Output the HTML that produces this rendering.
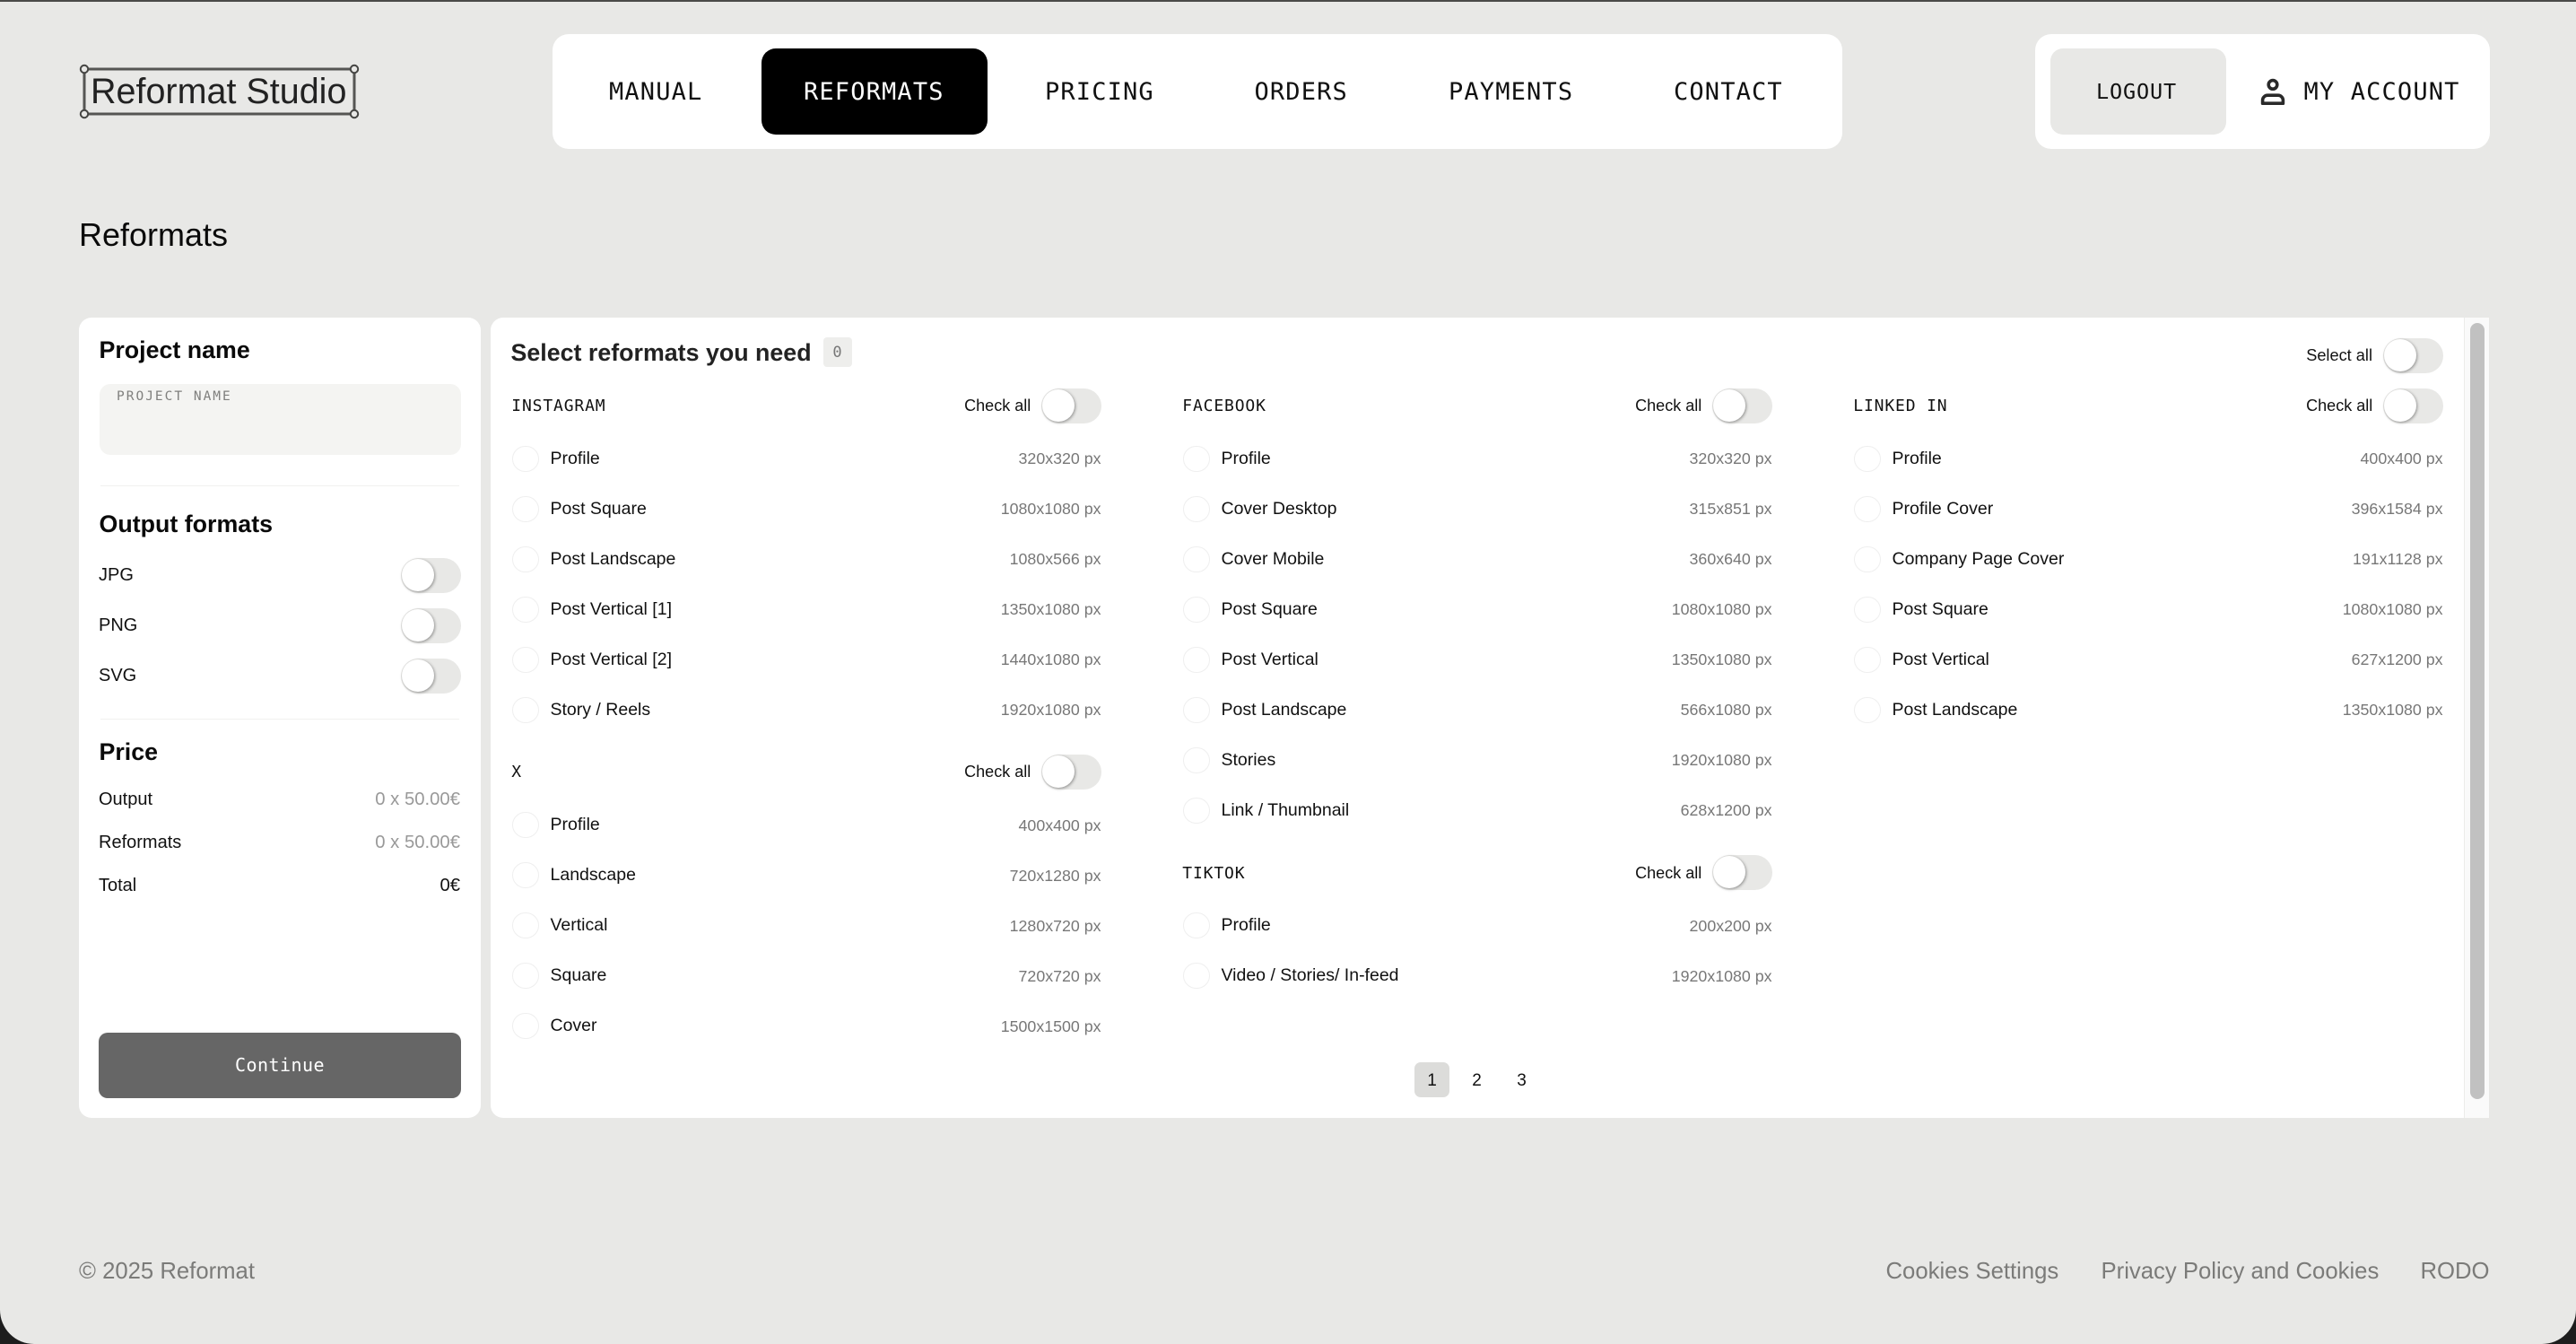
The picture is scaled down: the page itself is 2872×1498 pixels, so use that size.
<!DOCTYPE html>
<html lang="en"><head><meta charset="utf-8"><title>Reformats</title>
<style>
*{box-sizing:border-box;margin:0;padding:0}
html,body{width:2872px;height:1498px;overflow:hidden;background:#1d1d1d}
body{position:relative;font-family:"Liberation Sans",Arial,sans-serif;color:#111}
#pg{position:absolute;left:0;top:2px;width:2872px;height:1496px;background:#e8e8e6;border-radius:0 0 38px 38px}
#bar{position:absolute;left:0;top:0;width:2872px;height:2px;background:#4b4b49}
#root{position:absolute;left:0;top:0;width:2872px;height:1498px}
.a{position:absolute;white-space:nowrap}
.m{font-family:"DejaVu Sans Mono",monospace}
.panel{position:absolute;background:#fff;top:37.5px;height:128.5px;border-radius:18px}
.n{position:absolute;top:83px;line-height:40px;font-size:27px;letter-spacing:1.15px;font-family:"DejaVu Sans Mono",monospace;color:#111;white-space:nowrap}
.card{position:absolute;background:#fff;top:354px;height:892px}
.t{position:absolute;width:67px;height:39px;border-radius:20px;background:#e8e8e6}
.t:after{content:"";position:absolute;left:1px;top:1px;width:36px;height:36px;border-radius:50%;background:#fff;box-shadow:1px 1px 3px rgba(0,0,0,.38)}
.h2{position:absolute;font-weight:700;font-size:26.8px;line-height:40px;white-space:nowrap;color:#0a0a0a}
.l{position:absolute;font-size:20px;line-height:32px;white-space:nowrap;color:#111}
.v{position:absolute;font-size:20.3px;line-height:32px;white-space:nowrap;color:#999;right:0}
.div{position:absolute;left:112px;width:400px;height:1px;background:#f1f1ef}
.col{position:absolute;top:0;width:658px;height:1498px}
.hd{position:absolute;left:0;width:658px;height:40px}
.hd b{position:absolute;left:.8px;top:0;font:400 18px/41px "DejaVu Sans Mono",monospace;letter-spacing:.85px;color:#111;white-space:nowrap}
.hd i{position:absolute;right:78.3px;top:0;font:400 18px/40px "Liberation Sans",sans-serif;color:#111;white-space:nowrap}
.hd .t{right:0;top:.5px}
.r{position:absolute;left:0;width:658px;height:56px}
.r:before{content:"";position:absolute;left:1.5px;top:13.5px;width:27.5px;height:27.5px;border-radius:50%;border:1.5px solid #efefef;background:#fff}
.r span{position:absolute;left:44px;top:0;font-size:19.5px;line-height:56px;color:#111;white-space:nowrap}
.r em{position:absolute;right:0;top:0;font-style:normal;font-size:17.8px;line-height:57px;color:#777;white-space:nowrap}
.r.x em{line-height:59px}
.f{position:absolute;top:1397px;font-size:25.7px;line-height:40px;color:#7b7b79;white-space:nowrap}
.p{position:absolute;top:1184px;width:39px;height:39px;line-height:42px;text-align:center;font-size:19px;color:#111;border-radius:7px}
</style></head>
<body>
<div id="pg"></div><div id="bar"></div>
<div id="root">

<svg class="a" style="left:84px;top:67px" width="322" height="70" viewBox="84 67 322 70">
<rect x="94" y="77" width="301" height="50" fill="none" stroke="#555553" stroke-width="3"/>
<text x="101" y="115" font-family="Liberation Sans, sans-serif" font-size="39.5" fill="#222">Reformat Studio</text>
<g fill="#e8e8e6" stroke="#444442" stroke-width="2"><circle cx="94" cy="77" r="4.2"/><circle cx="395" cy="77" r="4.2"/><circle cx="94" cy="127" r="4.2"/><circle cx="395" cy="127" r="4.2"/></g>
</svg>

<div class="panel" style="left:616px;width:1437.5px"></div>
<div class="a" style="left:849px;top:54px;width:252px;height:96px;background:#000;border-radius:16px"></div>
<span class="n" style="left:679px">MANUAL</span>
<span class="n" style="left:896px;color:#fff">REFORMATS</span>
<span class="n" style="left:1165px">PRICING</span>
<span class="n" style="left:1398.5px">ORDERS</span>
<span class="n" style="left:1615px">PAYMENTS</span>
<span class="n" style="left:1866px">CONTACT</span>

<div class="panel" style="left:2269px;width:507px"></div>
<div class="a" style="left:2286px;top:54px;width:196px;height:96px;background:#e8e8e6;border-radius:14px"></div>
<span class="n" style="left:2337px;top:82px;font-size:23.5px;letter-spacing:.85px">LOGOUT</span>
<svg class="a" style="left:2518px;top:86px" width="32" height="32" viewBox="0 0 32 32" fill="none" stroke="#2a2a2a" stroke-width="3.6">
<circle cx="16" cy="8.4" r="4.8"/><path d="M4.6 29.2v-3.4a5.6 5.6 0 0 1 5.6-5.6h11.6a5.6 5.6 0 0 1 5.6 5.6v3.4z" stroke-linejoin="round"/>
</svg>
<span class="n" style="left:2568.5px">MY ACCOUNT</span>

<div class="a" style="left:88px;top:240px;font-size:36px;line-height:44px;color:#0a0a0a">Reformats</div>

<div class="card" style="left:88px;width:448px;border-radius:14px"></div>
<div class="h2" style="left:110.5px;top:370px">Project name</div>
<div class="a" style="left:110.5px;top:428px;width:403px;height:79px;background:#f4f4f2;border-radius:12px"></div>
<div class="a m" style="left:130px;top:432px;font-size:14.5px;line-height:20px;letter-spacing:2px;color:#7f7f7d">PROJECT NAME</div>
<div class="div" style="top:541px"></div>
<div class="h2" style="left:110.5px;top:564px">Output formats</div>
<div class="l" style="left:110px;top:625px">JPG</div><div class="t" style="left:446.5px;top:622px"></div>
<div class="l" style="left:110px;top:681px">PNG</div><div class="t" style="left:446.5px;top:678px"></div>
<div class="l" style="left:110px;top:737px">SVG</div><div class="t" style="left:446.5px;top:734px"></div>
<div class="div" style="top:801px"></div>
<div class="h2" style="left:110.5px;top:818px">Price</div>
<div class="l" style="left:110px;top:875px">Output</div><div class="v" style="right:2359px;top:875px">0 x 50.00€</div>
<div class="l" style="left:110px;top:923px">Reformats</div><div class="v" style="right:2359px;top:923px">0 x 50.00€</div>
<div class="l" style="left:110px;top:971px">Total</div><div class="v" style="right:2359px;top:971px;color:#111">0€</div>
<div class="a m" style="left:110px;top:1151px;width:404px;height:73px;background:#666;border-radius:10px;color:#fff;font-size:20px;letter-spacing:.45px;line-height:72px;text-align:center">Continue</div>

<div class="card" style="left:547px;width:2200px;border-radius:14px 0 0 14px"></div>
<div class="a" style="left:2746.7px;top:354px;width:1.6px;height:892px;background:#ececea"></div>
<div class="a" style="left:2748.3px;top:354px;width:27px;height:892px;background:#fafafa"></div>
<div class="a" style="left:2754px;top:360px;width:16px;height:865px;background:#c1c1c1;border-radius:8px"></div>

<div class="h2" style="left:569.5px;top:373px;color:#222">Select reformats you need</div>
<div class="a m" style="left:917.5px;top:376px;width:32px;height:33px;background:#eeeeec;border-radius:4px;font-size:17px;line-height:35px;text-align:center;color:#777">0</div>
<div class="a" style="right:227px;top:376px;font-size:18.2px;line-height:40px;color:#111">Select all</div>
<div class="t" style="left:2656.5px;top:377px"></div>

<div class="col" style="left:569.5px">
<div class="hd" style="top:432px"><b>INSTAGRAM</b><i>Check all</i><div class="t"></div></div>
<div class="r" style="top:483px"><span>Profile</span><em>320x320 px</em></div>
<div class="r" style="top:539px"><span>Post Square</span><em>1080x1080 px</em></div>
<div class="r" style="top:595px"><span>Post Landscape</span><em>1080x566 px</em></div>
<div class="r" style="top:651px"><span>Post Vertical [1]</span><em>1350x1080 px</em></div>
<div class="r" style="top:707px"><span>Post Vertical [2]</span><em>1440x1080 px</em></div>
<div class="r" style="top:763px"><span>Story / Reels</span><em>1920x1080 px</em></div>
<div class="hd" style="top:840px"><b>X</b><i>Check all</i><div class="t"></div></div>
<div class="r x" style="top:891px"><span>Profile</span><em>400x400 px</em></div>
<div class="r x" style="top:947px"><span>Landscape</span><em>720x1280 px</em></div>
<div class="r x" style="top:1003px"><span>Vertical</span><em>1280x720 px</em></div>
<div class="r x" style="top:1059px"><span>Square</span><em>720x720 px</em></div>
<div class="r x" style="top:1115px"><span>Cover</span><em>1500x1500 px</em></div>
</div>

<div class="col" style="left:1317.5px">
<div class="hd" style="top:432px"><b>FACEBOOK</b><i>Check all</i><div class="t"></div></div>
<div class="r" style="top:483px"><span>Profile</span><em>320x320 px</em></div>
<div class="r" style="top:539px"><span>Cover Desktop</span><em>315x851 px</em></div>
<div class="r" style="top:595px"><span>Cover Mobile</span><em>360x640 px</em></div>
<div class="r" style="top:651px"><span>Post Square</span><em>1080x1080 px</em></div>
<div class="r" style="top:707px"><span>Post Vertical</span><em>1350x1080 px</em></div>
<div class="r" style="top:763px"><span>Post Landscape</span><em>566x1080 px</em></div>
<div class="r" style="top:819px"><span>Stories</span><em>1920x1080 px</em></div>
<div class="r" style="top:875px"><span>Link / Thumbnail</span><em>628x1200 px</em></div>
<div class="hd" style="top:952.5px"><b>TIKTOK</b><i>Check all</i><div class="t"></div></div>
<div class="r x" style="top:1003px"><span>Profile</span><em>200x200 px</em></div>
<div class="r x" style="top:1059px"><span>Video / Stories/ In-feed</span><em>1920x1080 px</em></div>
</div>

<div class="col" style="left:2065.5px">
<div class="hd" style="top:432px"><b>LINKED IN</b><i>Check all</i><div class="t"></div></div>
<div class="r" style="top:483px"><span>Profile</span><em>400x400 px</em></div>
<div class="r" style="top:539px"><span>Profile Cover</span><em>396x1584 px</em></div>
<div class="r" style="top:595px"><span>Company Page Cover</span><em>191x1128 px</em></div>
<div class="r" style="top:651px"><span>Post Square</span><em>1080x1080 px</em></div>
<div class="r" style="top:707px"><span>Post Vertical</span><em>627x1200 px</em></div>
<div class="r" style="top:763px"><span>Post Landscape</span><em>1350x1080 px</em></div>
</div>

<div class="p" style="left:1577px;background:#dcdcda">1</div>
<div class="p" style="left:1627px">2</div>
<div class="p" style="left:1677px">3</div>

<div class="f" style="left:88px">© 2025 Reformat</div>
<div class="f" style="left:2102.5px">Cookies Settings</div>
<div class="f" style="left:2342.5px">Privacy Policy and Cookies</div>
<div class="f" style="right:96.5px">RODO</div>

</div>
</body></html>
